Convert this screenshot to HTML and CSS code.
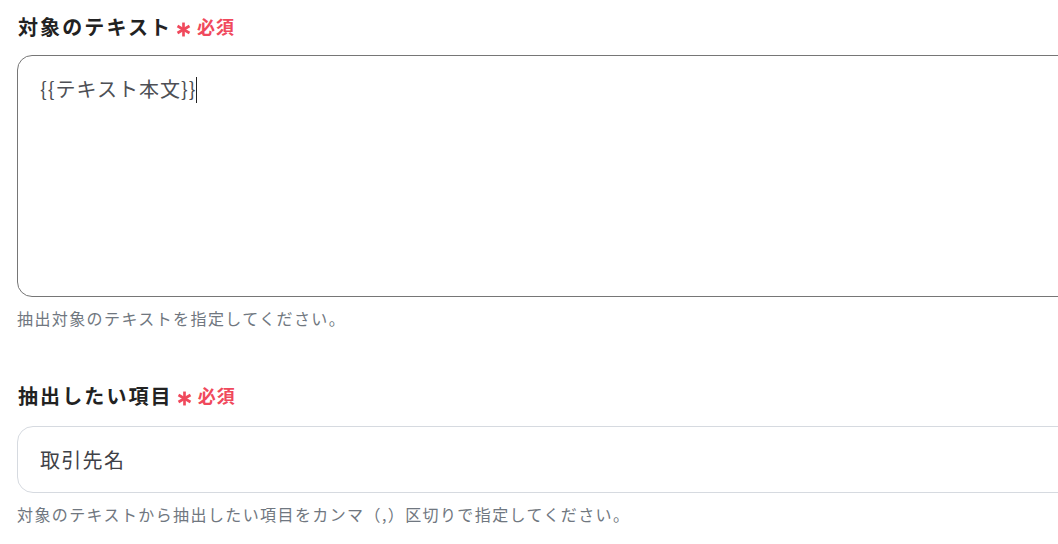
FILE: index.html
```html
<!DOCTYPE html>
<html lang="ja">
<head>
<meta charset="utf-8">
<link rel="stylesheet" href="styles.css">
</head>
<body>
<main class="form">
  <section class="field field-first">
    <div class="label">
      <span class="label-text">対象のテキスト</span>
      <svg class="req-mark" viewBox="0 0 14 14" width="15" height="15" aria-hidden="true">
        <g stroke="currentColor" stroke-width="2.5" stroke-linecap="butt">
          <line x1="7" y1="0.5" x2="7" y2="13.5"/>
          <line x1="1.4" y1="3.75" x2="12.6" y2="10.25"/>
          <line x1="1.4" y1="10.25" x2="12.6" y2="3.75"/>
        </g>
      </svg>
      <span class="req-text">必須</span>
    </div>
    <div class="textarea">{{テキスト本文}}<span class="caret"></span></div>
    <p class="hint">抽出対象のテキストを指定してください。</p>
  </section>
  <section class="field field-second">
    <div class="label">
      <span class="label-text">抽出したい項目</span>
      <svg class="req-mark" viewBox="0 0 14 14" width="15" height="15" aria-hidden="true">
        <g stroke="currentColor" stroke-width="2.5" stroke-linecap="butt">
          <line x1="7" y1="0.5" x2="7" y2="13.5"/>
          <line x1="1.4" y1="3.75" x2="12.6" y2="10.25"/>
          <line x1="1.4" y1="10.25" x2="12.6" y2="3.75"/>
        </g>
      </svg>
      <span class="req-text">必須</span>
    </div>
    <div class="input">取引先名</div>
    <p class="hint">対象のテキストから抽出したい項目をカンマ（,）区切りで指定してください。</p>
  </section>
</main>
</body>
</html>
```
FILE: styles.css
```css
html, body {
  margin: 0;
  padding: 0;
  background: #ffffff;
  overflow: hidden;
}

body {
  font-family: "Noto Sans CJK JP", "Noto Sans", sans-serif;
  color: #333333;
}

.form {
  width: 1100px;
  padding: 15px 0 0 17px;
}

.field-second {
  margin-top: 56px;
}

.label {
  display: flex;
  align-items: center;
  height: 24px;
  padding-left: 1px;
}

.label-text {
  font-size: 20px;
  font-weight: 700;
  line-height: 24px;
  letter-spacing: 2.1px;
  color: #222222;
}

.req-mark {
  color: #f0495c;
  margin-left: 4px;
  margin-top: 5px;
}

.req-text {
  color: #f0495c;
  font-size: 18px;
  font-weight: 700;
  line-height: 24px;
  letter-spacing: 1px;
  margin-left: 6px;
  margin-top: -3px;
}

.textarea {
  margin-top: 16px;
  height: 242px;
  box-sizing: border-box;
  border: 1px solid #767676;
  border-radius: 15px;
  padding: 19px 22px;
  font-size: 20px;
  line-height: 28px;
  letter-spacing: 1px;
  color: #4d4f55;
}

.caret {
  display: inline-block;
  width: 1px;
  height: 26px;
  background: #222222;
  vertical-align: -6px;
}

.input {
  margin-top: 18px;
  height: 67px;
  box-sizing: border-box;
  border: 1px solid #d6dae0;
  border-radius: 16px;
  padding: 0 22px;
  display: flex;
  align-items: center;
  font-size: 20px;
  letter-spacing: 1.3px;
  color: #3f4147;
}

.hint {
  margin: 11px 0 0 0;
  font-size: 16px;
  line-height: 20px;
  letter-spacing: 1.4px;
  color: #707780;
}
```
